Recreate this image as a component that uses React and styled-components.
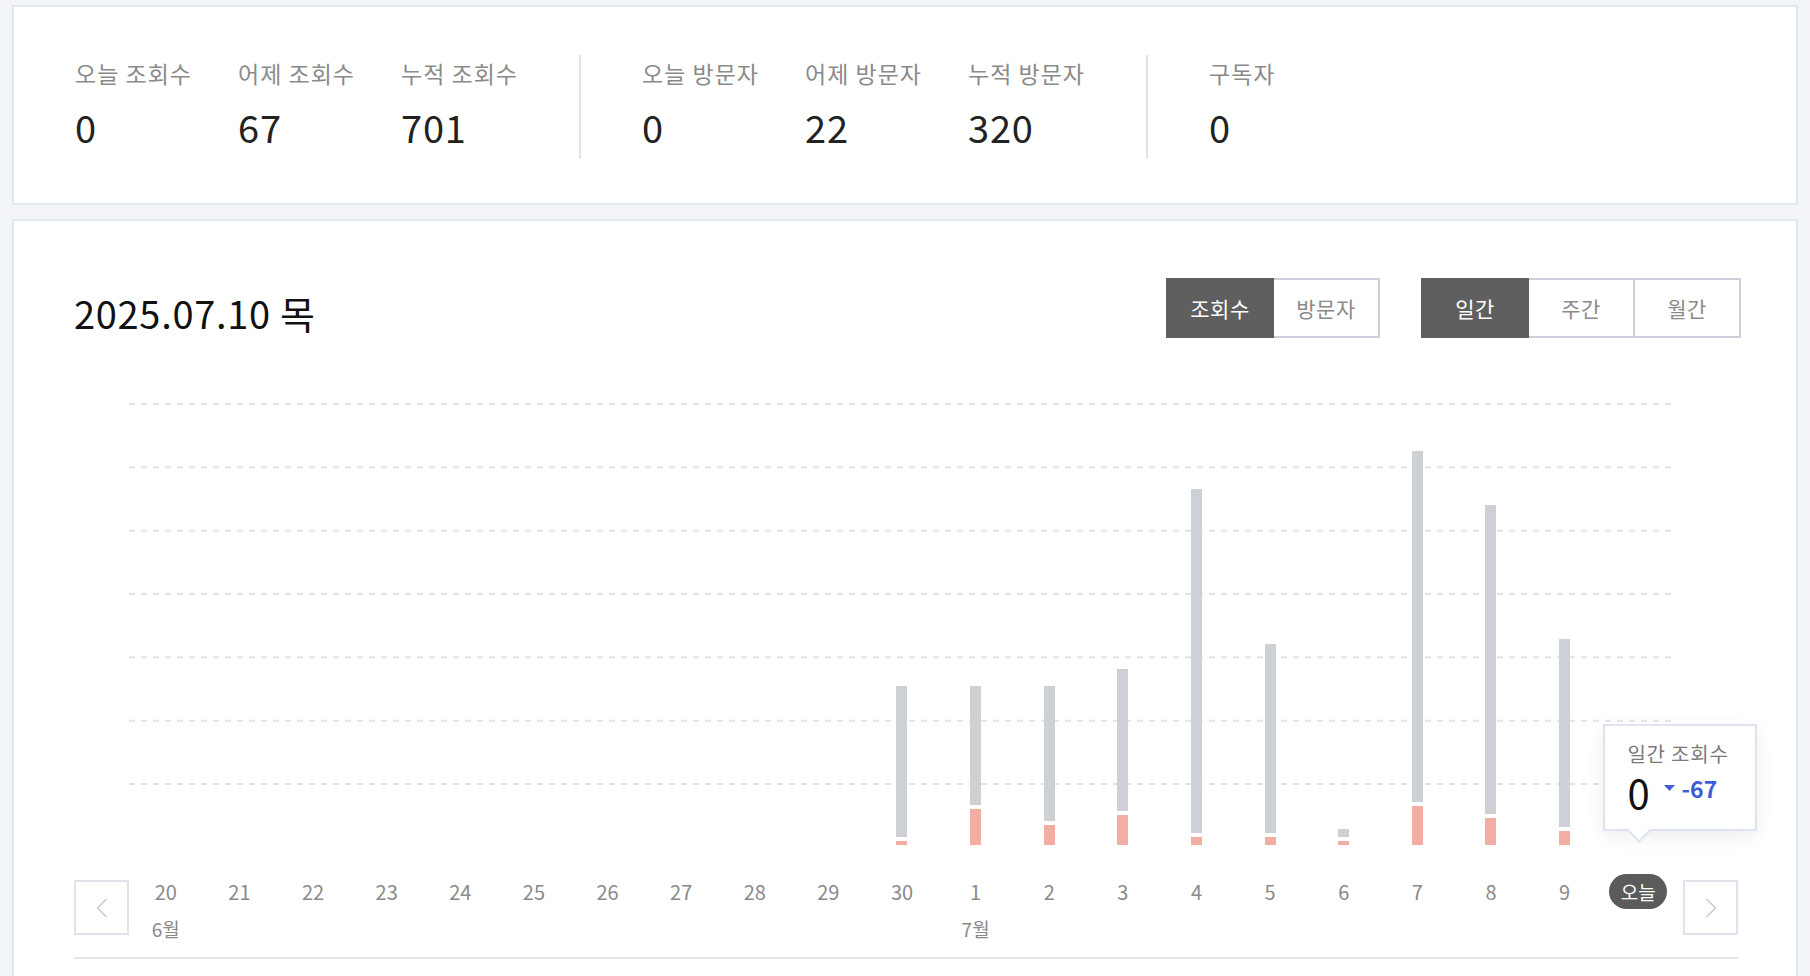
import React from "react";
import styled, { createGlobalStyle } from "styled-components";

const GlobalStyle = createGlobalStyle`
  * { box-sizing: border-box; }
  html, body { margin: 0; padding: 0; background: #f3f4f7; }
  body { font-family: "Noto Sans CJK KR", "Noto Sans", sans-serif; }
`;

const Page = styled.div`
  padding: 5px 12px 0;
  display: flex;
  flex-direction: column;
  gap: 14px;
`;

const Card = styled.section`
  background: #fff;
  border: 2px solid #e2e6ee;
`;

const StatsCard = styled(Card)`
  display: flex;
  align-items: center;
  padding: 48px 0 44px;
`;

const StatGroup = styled.div`
  display: flex;
  align-items: center;
  height: 104px;
  padding: 0 15px 0 61px;
  border-right: ${(p) => (p.$divider ? "2px solid #e3e3e3" : "none")};
`;

const Stat = styled.div`
  width: 163px;
  display: flex;
  flex-direction: column;
  padding-bottom: 5px;
`;

const StatLabel = styled.div`
  font-size: 23px;
  line-height: 24px;
  letter-spacing: 1px;
  color: #8a8a8a;
  margin-bottom: 20px;
  white-space: nowrap;
`;

const StatValue = styled.div`
  font-size: 38px;
  line-height: 44px;
  letter-spacing: 0.8px;
  color: #222;
`;

const ChartCard = styled(Card)`
  padding: 57px 58px 60px 60px;
`;

const Header = styled.div`
  display: flex;
  align-items: center;
  justify-content: space-between;
  height: 60px;
`;

const Title = styled.h2`
  margin: 0;
  padding-top: 10px;
  font-size: 38px;
  line-height: 44px;
  font-weight: 400;
  color: #111;
  letter-spacing: 0.7px;
`;

const Controls = styled.div`
  display: flex;
  gap: 41px;
  margin-right: -3px;
`;

const Segmented = styled.div`
  display: flex;
`;

const SegButton = styled.button`
  width: 108px;
  height: 60px;
  margin: 0;
  margin-left: -2px;
  &:first-child { margin-left: 0; }
  padding: 0;
  font-family: inherit;
  font-size: 21px;
  letter-spacing: 0.5px;
  border: 2px solid ${(p) => (p.$active ? "#5f5f5f" : "#cbd0da")};
  background: ${(p) => (p.$active ? "#5f5f5f" : "#fff")};
  color: ${(p) => (p.$active ? "#fff" : "#8a8a8a")};
  position: relative;
  z-index: ${(p) => (p.$active ? 1 : 0)};
  cursor: pointer;
`;

const Plot = styled.div`
  margin-top: 42px;
  height: 465px;
  display: grid;
  grid-template-columns: 55px repeat(21, 1fr) 63px;
  grid-template-rows: 465px;
`;

const GridLayer = styled.svg`
  grid-column: 2 / 23;
  grid-row: 1;
  width: 100%;
  height: 100%;
  display: block;
`;

const BarColumn = styled.div`
  grid-column: ${(p) => p.$col};
  grid-row: 1;
  display: flex;
  flex-direction: column;
  justify-content: flex-end;
  align-items: center;
  position: relative;
  z-index: 1;
`;

const Segment = styled.div`
  width: 11px;
  background: ${(p) => (p.$kind === "views" ? "#cdd0d5" : "#f3aea3")};
  margin-top: ${(p) => (p.$kind === "views" ? "0" : "4px")};
`;

const Tooltip = styled.div`
  position: absolute;
  left: 2px;
  bottom: 14px;
  width: 154px;
  height: 107px;
  background: #fff;
  border: 2px solid #dde3ef;
  box-shadow: 0 6px 18px rgba(0, 0, 0, 0.07);
  padding: 16px 0 0 22px;
  z-index: 3;
  &::after {
    content: "";
    position: absolute;
    left: 25px;
    bottom: -10px;
    width: 16px;
    height: 16px;
    background: #fff;
    border-right: 2px solid #dde3ef;
    border-bottom: 2px solid #dde3ef;
    transform: rotate(45deg);
  }
`;

const TipLabel = styled.div`
  font-size: 20px;
  line-height: 24px;
  letter-spacing: 0.8px;
  color: #7a7a7a;
  white-space: nowrap;
`;

const TipRow = styled.div`
  display: flex;
  align-items: center;
  margin-top: 6px;
  height: 40px;
`;

const TipValue = styled.span`
  font-size: 40px;
  line-height: 40px;
  color: #111;
  margin-right: 14px;
`;

const TipDelta = styled.span`
  display: flex;
  align-items: center;
  gap: 7px;
  font-size: 23px;
  font-weight: 700;
  color: #3d5cd6;
  margin-top: -9px;
`;

const Axis = styled.div`
  margin-top: 29px;
  padding-bottom: 17px;
  border-bottom: 2px solid #e6e6e6;
  display: grid;
  grid-template-columns: 55px repeat(21, 1fr) 63px;
  align-items: start;
`;

const NavButton = styled.button`
  width: 55px;
  height: 55px;
  margin-top: 6px;
  padding: 0;
  background: #fff;
  border: 2px solid #dfe3ec;
  display: flex;
  align-items: center;
  justify-content: center;
  justify-self: ${(p) => (p.$end ? "end" : "start")};
  cursor: pointer;
`;

const Tick = styled.div`
  display: flex;
  flex-direction: column;
  align-items: center;
`;

const DayLabel = styled.div`
  height: 36px;
  line-height: 36px;
  font-size: 20px;
  color: #8a8a8a;
`;

const TodayPill = styled.div`
  height: 35px;
  width: 58px;
  border-radius: 18px;
  background: #5b5b5b;
  color: #fff;
  font-size: 19px;
  line-height: 35px;
  text-align: center;
`;

const MonthLabel = styled.div`
  margin-top: 8px;
  line-height: 22px;
  height: 22px;
  font-size: 19px;
  color: #8a8a8a;
`;

const stats = [
  [
    ["오늘 조회수", "0"],
    ["어제 조회수", "67"],
    ["누적 조회수", "701"],
  ],
  [
    ["오늘 방문자", "0"],
    ["어제 방문자", "22"],
    ["누적 방문자", "320"],
  ],
  [["구독자", "0"]],
];

const days = [
  { d: "20", m: "6월" }, { d: "21" }, { d: "22" }, { d: "23" }, { d: "24" },
  { d: "25" }, { d: "26" }, { d: "27" }, { d: "28" }, { d: "29" },
  { d: "30", v: 151, s: 4 },
  { d: "1", m: "7월", v: 119, s: 36 },
  { d: "2", v: 135, s: 20 },
  { d: "3", v: 142, s: 30 },
  { d: "4", v: 344, s: 8 },
  { d: "5", v: 189, s: 8 },
  { d: "6", v: 8, s: 4 },
  { d: "7", v: 351, s: 39 },
  { d: "8", v: 309, s: 27 },
  { d: "9", v: 188, s: 14 },
  { d: "오늘", today: true },
];

const gridYs = [24, 87.33, 150.67, 214, 277.33, 340.67, 404];

function Chevron({ dir }) {
  const pts = dir === "left" ? "10,1 1,10 10,19" : "1,1 10,10 1,19";
  return (
    <svg width="12" height="20" viewBox="0 0 11 20" fill="none">
      <polyline points={pts} stroke="#c8ccd4" strokeWidth="1.6" fill="none" />
    </svg>
  );
}

export default function App() {
  return (
    <>
      <GlobalStyle />
      <Page>
        <StatsCard>
          {stats.map((group, gi) => (
            <StatGroup key={gi} $divider={gi < stats.length - 1}>
              {group.map(([label, value]) => (
                <Stat key={label}>
                  <StatLabel>{label}</StatLabel>
                  <StatValue>{value}</StatValue>
                </Stat>
              ))}
            </StatGroup>
          ))}
        </StatsCard>

        <ChartCard>
          <Header>
            <Title>2025.07.10 목</Title>
            <Controls>
              <Segmented>
                <SegButton $active>조회수</SegButton>
                <SegButton>방문자</SegButton>
              </Segmented>
              <Segmented>
                <SegButton $active>일간</SegButton>
                <SegButton>주간</SegButton>
                <SegButton>월간</SegButton>
              </Segmented>
            </Controls>
          </Header>

          <Plot>
            <GridLayer>
              {gridYs.map((y) => (
                <line
                  key={y}
                  x1="0"
                  x2="100%"
                  y1={y}
                  y2={y}
                  stroke="#e3e3e3"
                  strokeWidth="2"
                  strokeDasharray="6 6"
                />
              ))}
            </GridLayer>
            {days.map((day, i) => (
              <BarColumn key={day.d} $col={i + 2}>
                {day.v ? (
                  <>
                    <Segment $kind="views" style={{ height: day.v }} />
                    <Segment $kind="visits" style={{ height: day.s }} />
                  </>
                ) : null}
                {day.today ? (
                  <Tooltip>
                    <TipLabel>일간 조회수</TipLabel>
                    <TipRow>
                      <TipValue>0</TipValue>
                      <TipDelta>
                        <svg width="11" height="6" viewBox="0 0 11 6">
                          <polygon points="0,0 11,0 5.5,6" fill="#3d5cd6" />
                        </svg>
                        -67
                      </TipDelta>
                    </TipRow>
                  </Tooltip>
                ) : null}
              </BarColumn>
            ))}
          </Plot>

          <Axis>
            <NavButton aria-label="이전">
              <Chevron dir="left" />
            </NavButton>
            {days.map((day) => (
              <Tick key={day.d}>
                {day.today ? <TodayPill>{day.d}</TodayPill> : <DayLabel>{day.d}</DayLabel>}
                {day.m ? <MonthLabel>{day.m}</MonthLabel> : null}
              </Tick>
            ))}
            <NavButton $end aria-label="다음">
              <Chevron dir="right" />
            </NavButton>
          </Axis>
        </ChartCard>
      </Page>
    </>
  );
}
